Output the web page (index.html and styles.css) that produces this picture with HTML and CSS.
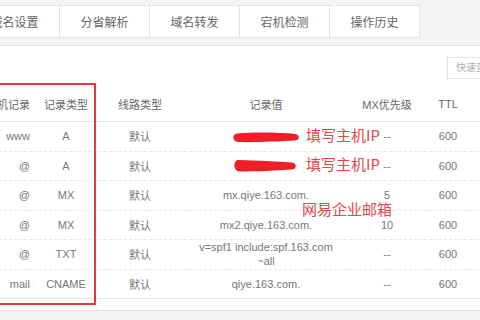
FILE: index.html
```html
<!DOCTYPE html>
<html lang="zh-CN">
<head>
<meta charset="utf-8">
<title>解析设置</title>
<link rel="stylesheet" href="styles.css">
</head>
<body>
<div class="page">
  <div class="top">
    <nav class="tabs">
      <a class="tab">域名设置</a>
      <a class="tab">分省解析</a>
      <a class="tab">域名转发</a>
      <a class="tab">宕机检测</a>
      <a class="tab">操作历史</a>
    </nav>
  </div>
  <div class="main">
    <div class="toolbar"><div class="search">快速查询记录</div></div>
    <div class="table">
      <div class="row head">
        <span class="c1">主机记录</span><span>记录类型</span><span>线路类型</span><span>记录值</span><span>MX优先级</span><span>TTL</span><span></span>
      </div>
      <div class="row">
        <span class="c1">www</span><span>A</span><span>默认</span><span></span><span>--</span><span>600</span><span></span>
      </div>
      <div class="row">
        <span class="c1">@</span><span>A</span><span>默认</span><span></span><span>--</span><span>600</span><span></span>
      </div>
      <div class="row">
        <span class="c1">@</span><span>MX</span><span>默认</span><span>mx.qiye.163.com.</span><span>5</span><span>600</span><span></span>
      </div>
      <div class="row">
        <span class="c1">@</span><span>MX</span><span>默认</span><span>mx2.qiye.163.com.</span><span>10</span><span>600</span><span></span>
      </div>
      <div class="row">
        <span class="c1">@</span><span>TXT</span><span>默认</span><span class="two">v=spf1 include:spf.163.com<br>~all</span><span>--</span><span>600</span><span></span>
      </div>
      <div class="row last">
        <span class="c1">mail</span><span>CNAME</span><span>默认</span><span>qiye.163.com.</span><span>--</span><span>600</span><span></span>
      </div>
    </div>
    <div class="mark-box"></div>
    <svg class="brush brush1" viewBox="0 0 68 12" width="68" height="12"><path d="M5 2.5 C 22 1, 48 1.5, 63 3 C 68 4, 68 9, 63 9.5 C 46 10.5, 22 11.5, 6 11 C 0 10.5, 0 3, 5 2.5 Z"/></svg>
    <svg class="brush brush2" viewBox="0 0 64 13" width="64" height="13"><path d="M5 1 C 24 1.5, 46 2.5, 59 3.5 C 64 4.5, 64 9.5, 59 10.5 C 44 11.5, 24 12.5, 6 12.5 C 0 12, 0 1.5, 5 1 Z"/></svg>
    <span class="note note1">填写主机IP</span>
    <span class="note note2">填写主机IP</span>
    <span class="note note3">网易企业邮箱</span>
  </div>
  <div class="footer"></div>
</div>
</body>
</html>
```
FILE: styles.css
```css
html, body {
  margin: 0;
  padding: 0;
  width: 480px;
  height: 320px;
  overflow: hidden;
  background: #fff;
  font-family: "Liberation Sans", "Noto Sans CJK SC", sans-serif;
}

.page {
  width: 548px;
  margin-left: -31px;
}

.top {
  background: #f3f3f3;
  padding-top: 5px;
  height: 46px;
  box-sizing: border-box;
  border-bottom: 1px solid #e2e2e2;
}

.tabs {
  display: flex;
  border-left: 1px solid #e3e3e3;
  width: max-content;
}

.tab {
  width: 90px;
  height: 33px;
  box-sizing: border-box;
  border: 1px solid #e3e3e3;
  border-left: none;
  background: #fff;
  display: flex;
  align-items: center;
  justify-content: center;
  font-size: 12px;
  color: #666;
}

.main {
  position: relative;
  background: #fff;
  padding-bottom: 11px;
}

.toolbar {
  height: 41px;
  box-sizing: border-box;
  padding-top: 11px;
  display: flex;
  justify-content: flex-end;
}

.search {
  width: 70px;
  height: 22px;
  box-sizing: border-box;
  border: 1px solid #e3e3e3;
  font-size: 10px;
  line-height: 20px;
  color: #b0b0b0;
  padding-left: 8px;
  white-space: nowrap;
  overflow: hidden;
}

.row {
  display: grid;
  grid-template-columns: 73px 48px 100px 152px 90px 32px 1fr;
  align-items: center;
  height: 29.5px;
  box-sizing: border-box;
  border-bottom: 1px dashed #e6e6e6;
  font-size: 11px;
  color: #777;
  text-align: center;
  white-space: nowrap;
}

.row.head {
  height: 35px;
  border-bottom: 1px solid #e8e8e8;
  color: #666;
}

.row.last {
  border-bottom: 1px solid #e8e8e8;
}

.row .c1 {
  text-align: right;
  padding-right: 12px;
}

.two {
  line-height: 14px;
}

.footer {
  height: 20px;
  border-top: 1px solid #e3e3e3;
  background: #f3f3f3;
}

.mark-box {
  position: absolute;
  left: 19px;
  top: 37px;
  width: 108px;
  height: 222px;
  box-sizing: border-box;
  border: 2px solid #e2393e;
}

.brush {
  position: absolute;
  fill: #ee1f26;
}

.brush1 {
  left: 263px;
  top: 85px;
}

.brush2 {
  left: 264px;
  top: 113px;
}

.note {
  position: absolute;
  font-family: "Noto Sans CJK SC", sans-serif;
  font-size: 15px;
  line-height: 17px;
  color: #e5464b;
  white-space: nowrap;
}

.note1 {
  left: 337px;
  top: 80px;
}

.note2 {
  left: 337px;
  top: 109px;
}

.note3 {
  left: 333px;
  top: 154px;
}
```
